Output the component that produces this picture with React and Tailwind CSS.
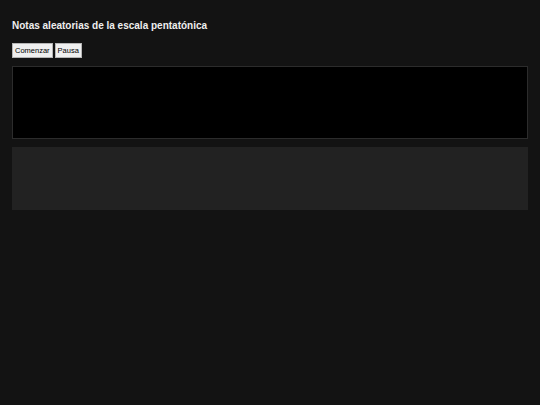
export default function App() {
  return (
    <div className="min-h-[405px] w-full bg-[#131313] px-3 pt-[20px] text-[#e5e5e5]" style={{ fontFamily: '"Liberation Sans", Arial, sans-serif' }}>
      <h1 className="text-[10px] font-bold leading-[12px] text-[#eeeeee]">Notas aleatorias de la escala pentatónica</h1>
      <div className="mt-[11px] flex gap-[2px]">
        <button className="h-[15px] border border-[#b5b5b5] bg-[#efefef] px-[2px] text-[7.5px] leading-[13px] text-black">Comenzar</button>
        <button className="h-[15px] border border-[#b5b5b5] bg-[#efefef] px-[2px] text-[7.5px] leading-[13px] text-black">Pausa</button>
      </div>
      <div className="mt-[8px] h-[73px] border border-[#2c2c2c] bg-black"></div>
      <div className="mt-[8px] h-[63px] bg-[#222222]"></div>
    </div>
  );
}
